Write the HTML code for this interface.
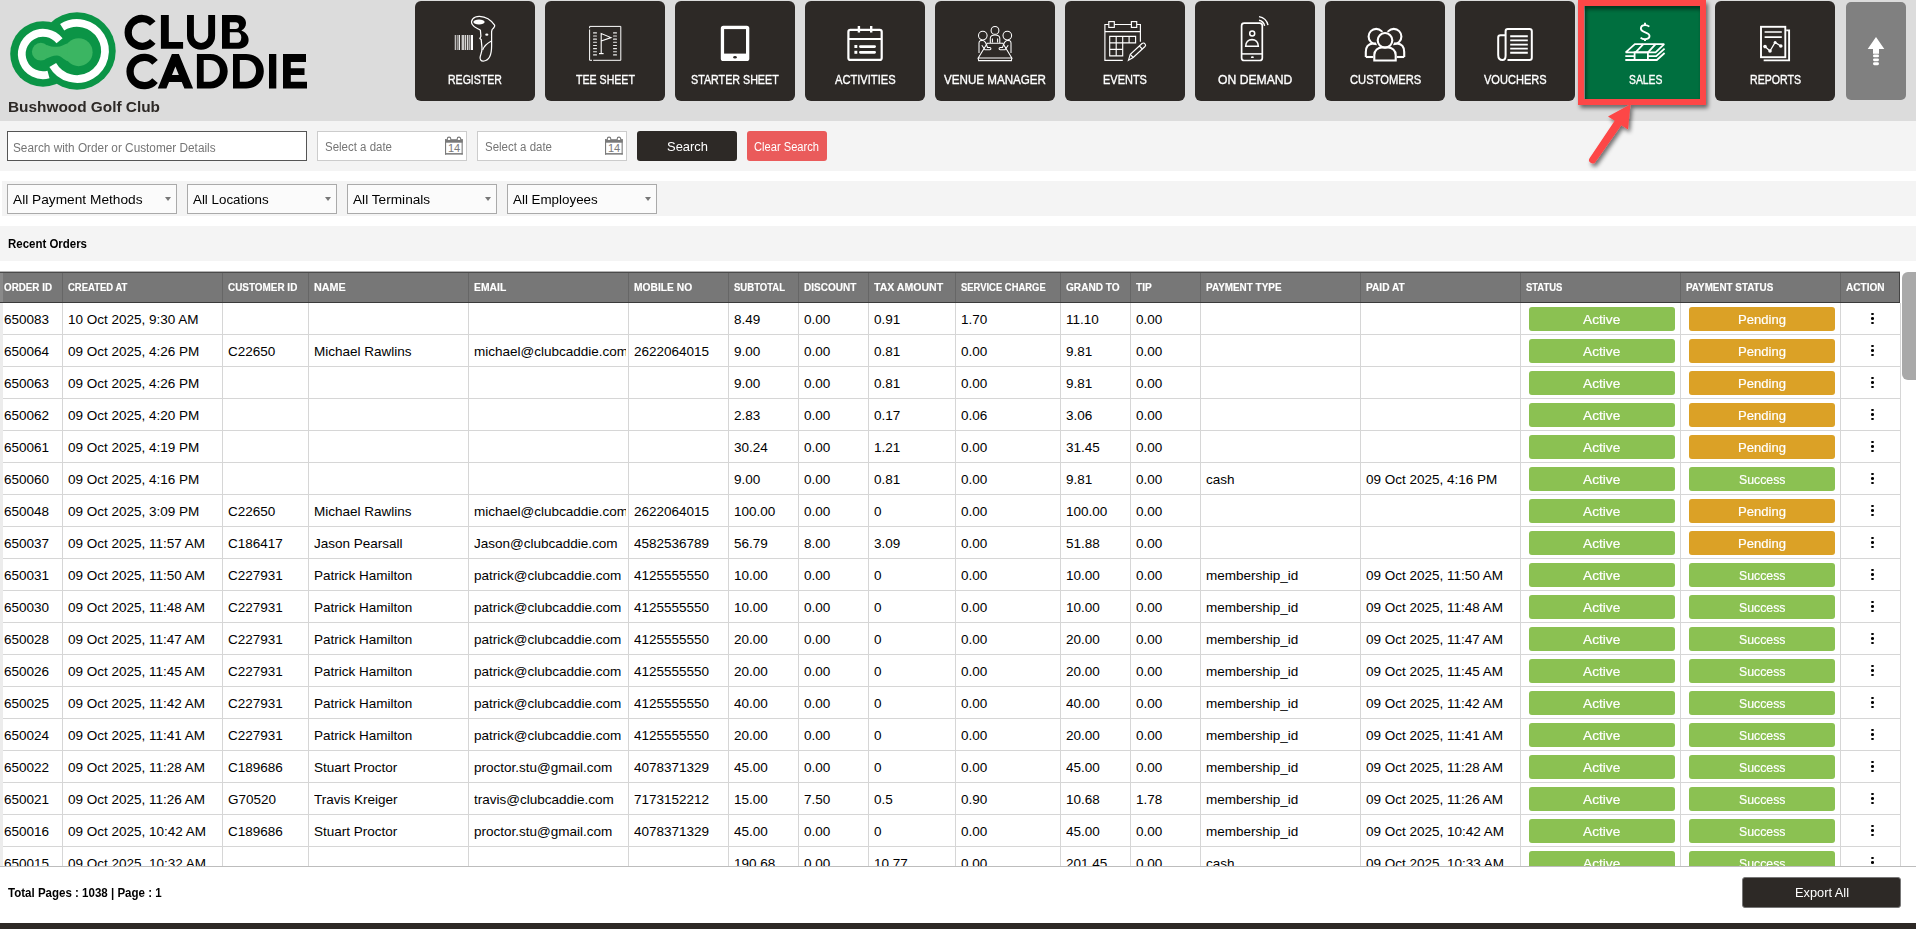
<!DOCTYPE html>
<html><head><meta charset="utf-8"><title>Club Caddie - Sales</title>
<style>
*{box-sizing:border-box}
html,body{margin:0;padding:0}
body{width:1916px;height:929px;overflow:hidden;position:relative;background:#fff;font-family:"Liberation Sans", sans-serif;color:#000}
.abs{position:absolute}
.nb{position:absolute;top:1px;width:120px;height:100px;background:#2d2926;border-radius:6px}
.nb svg{position:absolute;left:30px;top:9px;width:60px;height:60px}
.nb .lb{position:absolute;left:-40px;width:200px;top:70px;text-align:center;color:#fff;font-size:12.5px;line-height:18px;white-space:nowrap}
.nb .lb span{display:inline-block;transform:scaleX(.85)}
.sel{position:absolute;top:184px;height:30px;background:#fbfbfb;border:1px solid #aaa;font-size:13.5px;line-height:28px;padding-left:6px;white-space:nowrap}
.sel:after{content:"";position:absolute;right:5px;top:12px;border-left:3.5px solid transparent;border-right:3.5px solid transparent;border-top:4.5px solid #777}
.th{position:absolute;top:273px;height:29px;color:#fff;font-weight:bold;font-size:11.5px;line-height:29px;white-space:nowrap;overflow:hidden}
.th span{display:inline-block;transform:scaleX(.86);transform-origin:0 50%}
.td{position:absolute;height:31px;font-size:13.5px;line-height:32px;white-space:nowrap;overflow:hidden;color:#000}
.vl{position:absolute;width:1px;background:#d6d6d6}
.hl{position:absolute;height:1px;background:#d6d6d6}
.bd{position:absolute;width:146px;height:24px;border-radius:3px;color:#fff;font-size:13.5px;line-height:25px;text-align:center}
.act{background:#8bc152}
.pen{background:#dba126}
.keb{position:absolute;width:3px;height:2.2px;background:#000;border-radius:50%}
</style></head><body>

<div class="abs" style="left:0;top:0;width:1916px;height:121px;background:#dcdcdc"></div>
<svg class="abs" style="left:0;top:0" width="120" height="100" viewBox="0 0 120 100">
<g fill="#0b9446">
<circle cx="43" cy="54" r="32.8"/>
<circle cx="77" cy="51" r="38.7"/>
</g>
<g fill="none" stroke="#fff" stroke-width="7.8">
<path d="M59.55 40.74 A21.2 21.2 0 1 0 48.49 74.48"/>
<path d="M62.16 27.25 A28 28 0 1 1 52.75 65.00"/>
</g>
<g fill="#3bb562">
<circle cx="40.8" cy="51.7" r="8.9"/>
<circle cx="78.6" cy="52.2" r="14"/>
<path d="M46.5 44.9 C50 46.3 53 46.9 57 46.8 C61 46.7 64 44.5 67.9 43.2 L67.9 61.2 C64 59.8 61 55.6 57 55.4 C53 55.3 50 57 46.5 58.5 Z"/>
</g>
</svg>
<svg class="abs" style="left:0;top:0" width="400" height="100" viewBox="0 0 400 100">
<g fill="none" stroke="#000" stroke-width="7.3">
<path d="M152.75 23.47 A13.9 13.9 0 1 0 152.75 41.33"/>
<path d="M155.04 62.40 A14.15 14.15 0 1 0 155.04 80.60"/>
<path d="M190.45 14.9 V35.8 A10.6 10.6 0 0 0 211.65 35.8 V14.9" stroke-width="6.9"/>
</g>
<g fill="#000" fill-rule="evenodd">
<path d="M160.9 14.9 H168.8 V42 H183.1 V48.8 H160.9 Z"/>
<path d="M222 14.9 H236 C242 14.9 246 18.3 246 23 C246 26.5 244.3 29 241.3 30.5 C245.6 32 248.6 35.5 248.6 40 C248.6 45.5 244 48.8 237 48.8 H222 Z M229.8 22.2 H235.5 C237.8 22.2 239 23.6 239 25.6 C239 27.6 237.8 29 235.5 29 H229.8 Z M229.8 32.3 H237 C239.8 32.3 241.3 34.3 241.3 37.5 C241.3 40.8 239.8 42.8 237 42.8 H229.8 Z"/>
<path d="M157.8 88.5 L171.9 54 H178.9 L193.1 88.5 H184.4 L181.74 82 H169.06 L166.4 88.5 Z M171.96 74.9 L175.4 66.5 L178.84 74.9 Z"/>
<path d="M196.9 54 H210 C220.5 54 227.7 61.5 227.7 71.25 C227.7 81 220.5 88.5 210 88.5 H196.9 Z M203.7 59.9 H209.5 C215.8 59.9 219.9 64.5 219.9 70.8 C219.9 77.1 215.8 81.7 209.5 81.7 H203.7 Z"/>
<path transform="translate(36.1 0)" d="M196.9 54 H210 C220.5 54 227.7 61.5 227.7 71.25 C227.7 81 220.5 88.5 210 88.5 H196.9 Z M203.7 59.9 H209.5 C215.8 59.9 219.9 64.5 219.9 70.8 C219.9 77.1 215.8 81.7 209.5 81.7 H203.7 Z"/>
<path d="M269 54 H276.3 V88.5 H269 Z"/>
<path d="M283 54 H306 V61.9 H290.8 V68.2 H304.5 V74.9 H290.8 V81.7 H307 V88.5 H283 Z"/>
</g>
</svg>
<div class="abs" style="left:7.70px;top:98.58px;font-size:15.5px;line-height:15.5px;font-weight:bold;color:#2d2926;white-space:nowrap;transform:scaleX(0.9918);transform-origin:0 0;">Bushwood Golf Club</div>
<div class="nb" style="left:415px;background:#2d2926;border-radius:6px"><svg viewBox="0 0 60 60">
<g fill="#fff">
<rect x="9.8" y="25" width="0.9" height="15"/><rect x="11.8" y="25" width="0.7" height="15"/>
<rect x="13.6" y="25" width="1.3" height="15"/><rect x="16.6" y="25" width="2.4" height="15" opacity=".75"/>
<rect x="19.6" y="25" width="1.6" height="15" opacity=".8"/><rect x="22" y="25" width="1.2" height="15" opacity=".85"/>
<rect x="23.8" y="25" width="0.8" height="15"/><rect x="25.7" y="25" width="2.3" height="15"/>
</g>
<path d="M27.3 14.5 C25 10.5 28.5 6.2 34.5 6.3 C41 6.5 46.5 10.5 49.6 15.2 C50.2 16.6 48.4 18.3 47.1 19.6 L46.6 21.5 L46.6 36 C46.6 44.5 44.5 50.2 39 51 C35.8 51.4 34.4 49 35.3 46.2 C35.9 44.2 37.2 41.6 37 38 L36.2 29.5 L34.9 28.5 L35.9 26.2 L35.4 20.3 C33 18.6 29 17.6 27.3 14.5 Z" stroke="#fff" fill="none" stroke-width="1.25"/>
<path d="M46.4 31 C42.5 33 39 36.5 37.6 40" stroke="#fff" fill="none" stroke-width="1.2"/>
<ellipse cx="34" cy="12" rx="5.6" ry="2.6" fill="#fff"/>
<ellipse cx="41.8" cy="24.7" rx="1.6" ry="1.1" fill="#fff"/>
</svg></div>
<div class="abs" style="left:448.25px;top:74.32px;font-size:12.5px;line-height:12.5px;color:#fff;white-space:nowrap;transform:scaleX(0.8435);transform-origin:0 0;-webkit-text-stroke:0.35px #fff;">REGISTER</div>
<div class="nb" style="left:545px;background:#2d2926;border-radius:6px"><svg viewBox="0 0 60 60">
<path d="M14.6 19.5 V50.3 H17 M18.2 50.3 H45.8 V16.4 H14.6 V18.2" stroke="#fff" fill="none" stroke-width="1"/>
<g fill="#fff" opacity=".9"><rect x="18" y="22.30" width="4" height="1.1" rx=".5"/><rect x="38" y="22.30" width="4" height="1.1" rx=".5"/><rect x="18" y="25.45" width="4" height="1.1" rx=".5"/><rect x="38" y="25.45" width="4" height="1.1" rx=".5"/><rect x="18" y="28.60" width="4" height="1.1" rx=".5"/><rect x="38" y="28.60" width="4" height="1.1" rx=".5"/><rect x="18" y="31.75" width="4" height="1.1" rx=".5"/><rect x="38" y="31.75" width="4" height="1.1" rx=".5"/><rect x="18" y="34.90" width="4" height="1.1" rx=".5"/><rect x="38" y="34.90" width="4" height="1.1" rx=".5"/><rect x="18" y="38.05" width="4" height="1.1" rx=".5"/><rect x="38" y="38.05" width="4" height="1.1" rx=".5"/><rect x="18" y="41.20" width="4" height="1.1" rx=".5"/><rect x="38" y="41.20" width="4" height="1.1" rx=".5"/><rect x="18" y="44.35" width="4" height="1.1" rx=".5"/><rect x="38" y="44.35" width="4" height="1.1" rx=".5"/></g>
<path d="M26.2 43.5 V23.6 L36 27.6 L26.2 31" stroke="#fff" fill="none" stroke-width="1.1"/>
<path d="M24 43.6 H28.6" stroke="#fff" fill="none" stroke-width="1.2"/>
</svg></div>
<div class="abs" style="left:575.75px;top:74.32px;font-size:12.5px;line-height:12.5px;color:#fff;white-space:nowrap;transform:scaleX(0.8480);transform-origin:0 0;-webkit-text-stroke:0.35px #fff;">TEE SHEET</div>
<div class="nb" style="left:675px;background:#2d2926;border-radius:6px"><svg viewBox="0 0 60 60">
<rect x="15.8" y="15.8" width="28.5" height="35.2" rx="2.6" fill="#fff"/>
<rect x="19.1" y="19.1" width="21.9" height="24.5" fill="#2d2926"/>
<ellipse cx="30" cy="47.3" rx="1.8" ry="1.2" fill="#2d2926"/>
</svg></div>
<div class="abs" style="left:691.35px;top:74.32px;font-size:12.5px;line-height:12.5px;color:#fff;white-space:nowrap;transform:scaleX(0.8570);transform-origin:0 0;-webkit-text-stroke:0.35px #fff;">STARTER SHEET</div>
<div class="nb" style="left:805px;background:#2d2926;border-radius:6px"><svg viewBox="0 0 60 60">
<rect x="13.4" y="19.8" width="33.3" height="30.1" rx="2" stroke="#fff" fill="none" stroke-width="2.2"/>
<path d="M13.4 29 H46.7" stroke="#fff" fill="none" stroke-width="2.2"/>
<path d="M23.9 16 V22.6 M36.2 16 V22.6" stroke="#fff" fill="none" stroke-width="2.4"/>
<rect x="19.4" y="35" width="2.9" height="3" fill="#fff"/><rect x="19.4" y="40.8" width="2.9" height="3" fill="#fff"/>
<path d="M25.4 36.6 H39.6 M25.4 42.3 H39.6" stroke="#fff" fill="none" stroke-width="2.8" stroke-linecap="round"/>
</svg></div>
<div class="abs" style="left:834.90px;top:74.32px;font-size:12.5px;line-height:12.5px;color:#fff;white-space:nowrap;transform:scaleX(0.8903);transform-origin:0 0;-webkit-text-stroke:0.35px #fff;">ACTIVITIES</div>
<div class="nb" style="left:935px;background:#2d2926;border-radius:6px"><svg viewBox="0 0 60 60">
<g stroke="#fff" fill="none" stroke-width="1.05">
<circle cx="30" cy="20.4" r="3.9"/>
<circle cx="17.8" cy="25.6" r="4.3"/>
<circle cx="42.3" cy="25.6" r="4.3"/>
<path d="M25.3 33 V28.3 C25.3 26 27 25 30 25 C33 25 34.8 26 34.8 28.3 V33"/>
<path d="M27.4 32.5 V28.5 M32.6 32.5 V28.5"/>
<path d="M22.3 33.3 H37.8 L46.8 48 H13.2 Z"/>
<path d="M13.2 48 L13.6 50.6 H46.4 L46.8 48"/>
<path d="M14 43 V33 C14 31 15.5 30.3 17.5 30.4 C19.5 30.5 20.6 32 21.4 34.5 L22.5 37.5 H24.8 C26.2 37.5 26.4 39.6 24.8 39.8 H20 L16.8 35.2"/>
<path d="M46 43 V33 C46 31 44.5 30.3 42.5 30.4 C40.5 30.5 39.4 32 38.6 34.5 L37.5 37.5 H35.2 C33.8 37.5 33.6 39.6 35.2 39.8 H40 L43.2 35.2"/>
</g>
</svg></div>
<div class="abs" style="left:944.20px;top:74.32px;font-size:12.5px;line-height:12.5px;color:#fff;white-space:nowrap;transform:scaleX(0.9294);transform-origin:0 0;-webkit-text-stroke:0.35px #fff;">VENUE MANAGER</div>
<div class="nb" style="left:1065px;background:#2d2926;border-radius:6px"><svg viewBox="0 0 60 60">
<g stroke="#fff" fill="none" stroke-width="1.15">
<path d="M27.8 50.3 H9.9 V14.5 H45.4 V31.7"/>
<path d="M9.9 21.6 H45.4"/>
<rect x="13.8" y="11.6" width="5.5" height="5.8" fill="#2d2926"/>
<rect x="36.4" y="11.6" width="5.3" height="5.8" fill="#2d2926"/>
<path d="M14.7 26.3 H40.6 V32.9 H27.7 V45.8 H14.7 Z"/>
<path d="M21.2 26.3 V45.8 M27.7 26.3 V32.9 M34.1 26.3 V32.9 M14.7 32.9 H27.7 M14.7 39.3 H27.7"/>
<path d="M33.4 50.3 L35.3 44.3 L47 33.5 C48 32.7 49.2 32.8 50 33.8 C50.8 34.7 50.7 35.8 50 36.5 L38.2 47.5 Z"/>
<path d="M35.3 44.3 L38.2 47.5 M44.3 36 L47.5 39.2"/>
</g>
</svg></div>
<div class="abs" style="left:1103.25px;top:74.32px;font-size:12.5px;line-height:12.5px;color:#fff;white-space:nowrap;transform:scaleX(0.8777);transform-origin:0 0;-webkit-text-stroke:0.35px #fff;">EVENTS</div>
<div class="nb" style="left:1195px;background:#2d2926;border-radius:6px"><svg viewBox="0 0 60 60">
<g stroke="#fff" fill="none">
<rect x="16.6" y="13.1" width="20.7" height="37.4" rx="2.6" stroke-width="1.7"/>
<path d="M16.6 43.9 H37.3" stroke-width="1.5"/>
<circle cx="27.2" cy="23.6" r="2.5" stroke-width="1.5"/>
<path d="M20.7 36.3 C20.7 32 23.5 29.6 27 29.6 C30.5 29.6 33.3 32 33.3 36.3 Z" stroke-width="1.6"/>
<path d="M34 6.6 C38.5 7.3 42 10.8 43 15.2" stroke-width="1.4"/>
<path d="M34 10.3 C36.8 10.8 39 13 39.6 15.9" stroke-width="1.4"/>
</g>
<ellipse cx="27.4" cy="47.2" rx="1.5" ry="0.9" fill="#fff"/>
</svg></div>
<div class="abs" style="left:1218.00px;top:74.32px;font-size:12.5px;line-height:12.5px;color:#fff;white-space:nowrap;transform:scaleX(0.9739);transform-origin:0 0;-webkit-text-stroke:0.35px #fff;">ON DEMAND</div>
<div class="nb" style="left:1325px;background:#2d2926;border-radius:6px"><svg viewBox="0 0 60 60">
<g stroke="#fff" fill="none" stroke-width="2.1">
<path d="M10.8 47 V42 C10.8 36.5 14 33.8 18 33.5 L22 33.5"/>
<path d="M10.8 47 H18.6"/>
<circle cx="21.2" cy="26.5" r="7.6"/>
<path d="M49.2 47 V42 C49.2 36.5 46 33.8 42 33.5 L38 33.5"/>
<path d="M49.2 47 H41.4"/>
<circle cx="38.8" cy="26.5" r="7.6"/>
</g>
<circle cx="30" cy="30.5" r="9.3" fill="#2d2926"/>
<path d="M18.3 51.5 V44 C18.3 39.5 22 36.2 26.5 36.2 H33.5 C38 36.2 41.7 39.5 41.7 44 V51.5 Z" fill="#2d2926"/>
<g stroke="#fff" fill="none" stroke-width="2.1">
<circle cx="30" cy="30.3" r="7.3"/>
<path d="M19.3 50.5 V45 C19.3 40.5 23 37.5 27 37.5 H33 C37 37.5 40.7 40.5 40.7 45 V50.5 Z"/>
</g>
</svg></div>
<div class="abs" style="left:1349.60px;top:74.32px;font-size:12.5px;line-height:12.5px;color:#fff;white-space:nowrap;transform:scaleX(0.8940);transform-origin:0 0;-webkit-text-stroke:0.35px #fff;">CUSTOMERS</div>
<div class="nb" style="left:1455px;background:#2d2926;border-radius:6px"><svg viewBox="0 0 60 60">
<g stroke="#fff" fill="none" stroke-width="2">
<path d="M22.5 50 H44.5 C46 50 46.8 49.2 46.8 47.7 V21.3 C46.8 19.8 46 19 44.5 19 H22.8 C21.3 19 20.6 19.8 20.6 21.3 V45.5 C20.6 48.5 19.8 50 17.5 50 C14.7 50 13.2 48 13.2 45 V27.5 C13.2 26 14 25.3 15.5 25.3 H20.6"/>
<path d="M25.2 26.3 H42.8 M25.2 30.4 H42.8 M25.2 34.6 H42.8 M25.2 38.6 H42.8 M25.2 42.7 H42.8" stroke-width="1.9"/>
</g>
</svg></div>
<div class="abs" style="left:1483.90px;top:74.32px;font-size:12.5px;line-height:12.5px;color:#fff;white-space:nowrap;transform:scaleX(0.8836);transform-origin:0 0;-webkit-text-stroke:0.35px #fff;">VOUCHERS</div>
<div class="nb" style="left:1585px;background:#006f3f;border-radius:0"><svg viewBox="0 0 60 60">
<g stroke="#fff" fill="none" stroke-width="1.9">
<path d="M34.3 16.6 C33.2 15.6 32 15.1 30 15.1 C27.6 15.1 25.9 16.4 25.9 18.6 C25.9 23.2 34.5 21.6 34.5 26.1 C34.5 28.3 32.7 29.2 30 29.2 C28.2 29.2 26.6 28.6 25.6 27.6"/>
<path d="M30 12.8 V15.1 M30 29.2 V31"/>
</g>
<g stroke="#fff" fill="none" stroke-width="1.8" stroke-miterlimit="2">
<path d="M10.7 42.3 L19.9 34.1 H49.2 L40.6 42.3 Z"/>
<path d="M20.6 42.3 L28.3 34.1 M33 42.3 L40.6 34.1"/>
<rect x="19.6" y="42.3" width="13.3" height="7.7"/>
<path d="M10.3 46.2 H19.6 M32.9 46.2 H41.2 L49.6 38.6"/>
<path d="M10.3 50 H41.8 L49.6 43"/>
</g>
</svg></div>
<div class="abs" style="left:1628.50px;top:74.32px;font-size:12.5px;line-height:12.5px;color:#fff;white-space:nowrap;transform:scaleX(0.8287);transform-origin:0 0;-webkit-text-stroke:0.35px #fff;">SALES</div>
<div class="nb" style="left:1715px;background:#2d2926;border-radius:6px"><svg viewBox="0 0 60 60">
<g stroke="#fff" fill="none" stroke-width="1.9">
<rect x="16" y="16.8" width="24.3" height="30.4"/>
<path d="M19.6 49.6 V50.4 H44.1 V20.4 H41.2"/>
<path d="M19.6 22 H36.8 M19.6 27.1 H36.8" stroke-width="1.7"/>
<path d="M20 36.6 L25 41 L30.1 32.5 L35.8 36" stroke-width="1.3"/>
</g>
<g fill="#fff"><circle cx="20" cy="36.6" r="1.8"/><circle cx="25" cy="41" r="1.8"/><circle cx="30.1" cy="32.5" r="1.5"/><circle cx="35.8" cy="36" r="1.8"/></g>
</svg></div>
<div class="abs" style="left:1749.65px;top:74.32px;font-size:12.5px;line-height:12.5px;color:#fff;white-space:nowrap;transform:scaleX(0.8488);transform-origin:0 0;-webkit-text-stroke:0.35px #fff;">REPORTS</div>
<div class="abs" style="left:1846px;top:2px;width:60px;height:98px;background:#808080;border-radius:5px"></div>
<svg class="abs" style="left:1846px;top:2px" width="60" height="98" viewBox="0 0 60 98">
<path d="M30 35 L38.3 47 H33 V51.8 H27 V47 H21.7 Z" fill="#fff"/>
<rect x="27" y="52.6" width="6" height="2.7" rx="1.35" fill="#fff"/>
<rect x="27" y="56.5" width="6" height="2.7" rx="1.35" fill="#fff"/>
<rect x="27" y="60.3" width="6" height="2.9" rx="1.45" fill="#fff"/>
</svg>
<div class="abs" style="left:0;top:121px;width:1916px;height:50px;background:#f4f4f4"></div>
<div class="abs" style="left:7px;top:131px;width:300px;height:30px;background:#fff;border:1px solid #555"></div>
<div class="abs" style="left:13.40px;top:141.74px;font-size:12px;line-height:12px;color:#757575;white-space:nowrap;transform:scaleX(0.9831);transform-origin:0 0;">Search with Order or Customer Details</div>
<div class="abs" style="left:317px;top:131px;width:150px;height:30px;background:#fff;border:1px solid #ccc"><svg class="abs" style="left:126px;top:4px" width="20" height="20" viewBox="-1 -1 20 20"><g fill="#7a7a7a"><rect x="0" y="2.2" width="17.7" height="3.5"/><rect x="0" y="2.2" width="1.1" height="15.4"/><rect x="16.6" y="2.2" width="1.1" height="15.4"/><rect x="0" y="16.1" width="17.7" height="1.5"/></g><path d="M2.3 3 V1.9 A1.75 1.75 0 0 1 5.8 1.9 V3 M12.2 3 V1.9 A1.75 1.75 0 0 1 15.7 1.9 V3" fill="#fff" stroke="#7a7a7a" stroke-width="1.1"/><text x="9.1" y="14.9" font-family="Liberation Sans" font-size="11" fill="#7a7a7a" text-anchor="middle">14</text></svg></div>
<div class="abs" style="left:325.00px;top:141.32px;font-size:12.5px;line-height:12.5px;color:#757575;white-space:nowrap;transform:scaleX(0.9182);transform-origin:0 0;">Select a date</div>
<div class="abs" style="left:477px;top:131px;width:150px;height:30px;background:#fff;border:1px solid #ccc"><svg class="abs" style="left:126px;top:4px" width="20" height="20" viewBox="-1 -1 20 20"><g fill="#7a7a7a"><rect x="0" y="2.2" width="17.7" height="3.5"/><rect x="0" y="2.2" width="1.1" height="15.4"/><rect x="16.6" y="2.2" width="1.1" height="15.4"/><rect x="0" y="16.1" width="17.7" height="1.5"/></g><path d="M2.3 3 V1.9 A1.75 1.75 0 0 1 5.8 1.9 V3 M12.2 3 V1.9 A1.75 1.75 0 0 1 15.7 1.9 V3" fill="#fff" stroke="#7a7a7a" stroke-width="1.1"/><text x="9.1" y="14.9" font-family="Liberation Sans" font-size="11" fill="#7a7a7a" text-anchor="middle">14</text></svg></div>
<div class="abs" style="left:485.00px;top:141.32px;font-size:12.5px;line-height:12.5px;color:#757575;white-space:nowrap;transform:scaleX(0.9182);transform-origin:0 0;">Select a date</div>
<div class="abs" style="left:637px;top:131px;width:100px;height:30px;background:#2d2926;border-radius:3px"></div>
<div class="abs" style="left:666.50px;top:140.37px;font-size:13.5px;line-height:13.5px;color:#fff;white-space:nowrap;transform:scaleX(0.9585);transform-origin:0 0;">Search</div>
<div class="abs" style="left:747px;top:131px;width:80px;height:30px;background:#ea5b5b;border-radius:3px"></div>
<div class="abs" style="left:754.00px;top:141.32px;font-size:12.5px;line-height:12.5px;color:#fff;white-space:nowrap;transform:scaleX(0.8910);transform-origin:0 0;">Clear Search</div>
<div class="abs" style="left:2px;top:181px;width:1914px;height:35px;background:#f4f4f4"></div>
<div class="sel" style="left:7px;width:170px"></div>
<div class="abs" style="left:13.20px;top:192.80px;font-size:13px;line-height:13px;color:#000;white-space:nowrap;transform:scaleX(1.0551);transform-origin:0 0;">All Payment Methods</div>
<div class="sel" style="left:187px;width:150px"></div>
<div class="abs" style="left:193.20px;top:192.80px;font-size:13px;line-height:13px;color:#000;white-space:nowrap;transform:scaleX(1.0270);transform-origin:0 0;">All Locations</div>
<div class="sel" style="left:347px;width:150px"></div>
<div class="abs" style="left:353.20px;top:192.80px;font-size:13px;line-height:13px;color:#000;white-space:nowrap;transform:scaleX(1.0510);transform-origin:0 0;">All Terminals</div>
<div class="sel" style="left:507px;width:150px"></div>
<div class="abs" style="left:513.20px;top:192.80px;font-size:13px;line-height:13px;color:#000;white-space:nowrap;transform:scaleX(1.0283);transform-origin:0 0;">All Employees</div>
<div class="abs" style="left:0;top:226px;width:1916px;height:35px;background:#f4f4f4"></div>
<div class="abs" style="left:7.50px;top:238.32px;font-size:12.5px;line-height:12.5px;font-weight:bold;color:#000;white-space:nowrap;transform:scaleX(0.9170);transform-origin:0 0;">Recent Orders</div>
<div class="abs" style="left:0;top:271px;width:1900px;height:1px;background:#b4b4b4"></div>
<div class="abs" style="left:0;top:272px;width:1900px;height:1px;background:#4a4a4a"></div>
<div class="abs" style="left:0;top:273px;width:1900px;height:29px;background:#777"></div>
<div class="abs" style="left:0;top:302px;width:1900px;height:1px;background:#3a3a3a"></div>
<div class="abs" style="left:0;top:273px;width:3px;height:29px;background:#8a8a8a"></div>
<div class="abs" style="left:62px;top:273px;width:1px;height:29px;background:#666"></div>
<div class="abs" style="left:222px;top:273px;width:1px;height:29px;background:#666"></div>
<div class="abs" style="left:308px;top:273px;width:1px;height:29px;background:#666"></div>
<div class="abs" style="left:468px;top:273px;width:1px;height:29px;background:#666"></div>
<div class="abs" style="left:628px;top:273px;width:1px;height:29px;background:#666"></div>
<div class="abs" style="left:728px;top:273px;width:1px;height:29px;background:#666"></div>
<div class="abs" style="left:798px;top:273px;width:1px;height:29px;background:#666"></div>
<div class="abs" style="left:868px;top:273px;width:1px;height:29px;background:#666"></div>
<div class="abs" style="left:955px;top:273px;width:1px;height:29px;background:#666"></div>
<div class="abs" style="left:1060px;top:273px;width:1px;height:29px;background:#666"></div>
<div class="abs" style="left:1130px;top:273px;width:1px;height:29px;background:#666"></div>
<div class="abs" style="left:1200px;top:273px;width:1px;height:29px;background:#666"></div>
<div class="abs" style="left:1360px;top:273px;width:1px;height:29px;background:#666"></div>
<div class="abs" style="left:1520px;top:273px;width:1px;height:29px;background:#666"></div>
<div class="abs" style="left:1680px;top:273px;width:1px;height:29px;background:#666"></div>
<div class="abs" style="left:1840px;top:273px;width:1px;height:29px;background:#666"></div>
<div class="abs" style="left:1899px;top:273px;width:1px;height:29px;background:#444"></div>
<div class="abs" style="left:4.00px;top:282.17px;font-size:11.5px;line-height:11.5px;font-weight:bold;color:#fff;white-space:nowrap;transform:scaleX(0.8537);transform-origin:0 0;-webkit-text-stroke:0.15px #fff;">ORDER ID</div>
<div class="abs" style="left:68.30px;top:282.17px;font-size:11.5px;line-height:11.5px;font-weight:bold;color:#fff;white-space:nowrap;transform:scaleX(0.8252);transform-origin:0 0;-webkit-text-stroke:0.15px #fff;">CREATED AT</div>
<div class="abs" style="left:228.30px;top:282.17px;font-size:11.5px;line-height:11.5px;font-weight:bold;color:#fff;white-space:nowrap;transform:scaleX(0.8631);transform-origin:0 0;-webkit-text-stroke:0.15px #fff;">CUSTOMER ID</div>
<div class="abs" style="left:314.30px;top:282.17px;font-size:11.5px;line-height:11.5px;font-weight:bold;color:#fff;white-space:nowrap;transform:scaleX(0.9362);transform-origin:0 0;-webkit-text-stroke:0.15px #fff;">NAME</div>
<div class="abs" style="left:474.30px;top:282.17px;font-size:11.5px;line-height:11.5px;font-weight:bold;color:#fff;white-space:nowrap;transform:scaleX(0.9001);transform-origin:0 0;-webkit-text-stroke:0.15px #fff;">EMAIL</div>
<div class="abs" style="left:634.30px;top:282.17px;font-size:11.5px;line-height:11.5px;font-weight:bold;color:#fff;white-space:nowrap;transform:scaleX(0.8916);transform-origin:0 0;-webkit-text-stroke:0.15px #fff;">MOBILE NO</div>
<div class="abs" style="left:734.30px;top:282.17px;font-size:11.5px;line-height:11.5px;font-weight:bold;color:#fff;white-space:nowrap;transform:scaleX(0.8303);transform-origin:0 0;-webkit-text-stroke:0.15px #fff;">SUBTOTAL</div>
<div class="abs" style="left:804.30px;top:282.17px;font-size:11.5px;line-height:11.5px;font-weight:bold;color:#fff;white-space:nowrap;transform:scaleX(0.8709);transform-origin:0 0;-webkit-text-stroke:0.15px #fff;">DISCOUNT</div>
<div class="abs" style="left:874.30px;top:282.17px;font-size:11.5px;line-height:11.5px;font-weight:bold;color:#fff;white-space:nowrap;transform:scaleX(0.9167);transform-origin:0 0;-webkit-text-stroke:0.15px #fff;">TAX AMOUNT</div>
<div class="abs" style="left:961.30px;top:282.17px;font-size:11.5px;line-height:11.5px;font-weight:bold;color:#fff;white-space:nowrap;transform:scaleX(0.8198);transform-origin:0 0;-webkit-text-stroke:0.15px #fff;">SERVICE CHARGE</div>
<div class="abs" style="left:1066.30px;top:282.17px;font-size:11.5px;line-height:11.5px;font-weight:bold;color:#fff;white-space:nowrap;transform:scaleX(0.8769);transform-origin:0 0;-webkit-text-stroke:0.15px #fff;">GRAND TO</div>
<div class="abs" style="left:1136.30px;top:282.17px;font-size:11.5px;line-height:11.5px;font-weight:bold;color:#fff;white-space:nowrap;transform:scaleX(0.8776);transform-origin:0 0;-webkit-text-stroke:0.15px #fff;">TIP</div>
<div class="abs" style="left:1206.30px;top:282.17px;font-size:11.5px;line-height:11.5px;font-weight:bold;color:#fff;white-space:nowrap;transform:scaleX(0.8624);transform-origin:0 0;-webkit-text-stroke:0.15px #fff;">PAYMENT TYPE</div>
<div class="abs" style="left:1366.30px;top:282.17px;font-size:11.5px;line-height:11.5px;font-weight:bold;color:#fff;white-space:nowrap;transform:scaleX(0.8822);transform-origin:0 0;-webkit-text-stroke:0.15px #fff;">PAID AT</div>
<div class="abs" style="left:1526.30px;top:282.17px;font-size:11.5px;line-height:11.5px;font-weight:bold;color:#fff;white-space:nowrap;transform:scaleX(0.8218);transform-origin:0 0;-webkit-text-stroke:0.15px #fff;">STATUS</div>
<div class="abs" style="left:1686.30px;top:282.17px;font-size:11.5px;line-height:11.5px;font-weight:bold;color:#fff;white-space:nowrap;transform:scaleX(0.8575);transform-origin:0 0;-webkit-text-stroke:0.15px #fff;">PAYMENT STATUS</div>
<div class="abs" style="left:1846.30px;top:282.17px;font-size:11.5px;line-height:11.5px;font-weight:bold;color:#fff;white-space:nowrap;transform:scaleX(0.8757);transform-origin:0 0;-webkit-text-stroke:0.15px #fff;">ACTION</div>
<div class="abs" style="left:0;top:303px;width:1916px;height:563px;overflow:hidden">
<div class="abs" style="left:0;top:0;width:3px;height:563px;background:#ececec"></div>
<div class="vl" style="left:62px;top:0;height:563px"></div>
<div class="vl" style="left:222px;top:0;height:563px"></div>
<div class="vl" style="left:308px;top:0;height:563px"></div>
<div class="vl" style="left:468px;top:0;height:563px"></div>
<div class="vl" style="left:628px;top:0;height:563px"></div>
<div class="vl" style="left:728px;top:0;height:563px"></div>
<div class="vl" style="left:798px;top:0;height:563px"></div>
<div class="vl" style="left:868px;top:0;height:563px"></div>
<div class="vl" style="left:955px;top:0;height:563px"></div>
<div class="vl" style="left:1060px;top:0;height:563px"></div>
<div class="vl" style="left:1130px;top:0;height:563px"></div>
<div class="vl" style="left:1200px;top:0;height:563px"></div>
<div class="vl" style="left:1360px;top:0;height:563px"></div>
<div class="vl" style="left:1520px;top:0;height:563px"></div>
<div class="vl" style="left:1680px;top:0;height:563px"></div>
<div class="vl" style="left:1840px;top:0;height:563px"></div>
<div class="vl" style="left:1900px;top:0;height:563px"></div>
<div class="hl" style="left:3px;top:31px;width:1897px"></div>
<div class="td" style="left:4px;top:1px;width:56px">650083</div>
<div class="td" style="left:68px;top:1px;width:152px">10 Oct 2025, 9:30 AM</div>
<div class="td" style="left:734px;top:1px;width:62px">8.49</div>
<div class="td" style="left:804px;top:1px;width:62px">0.00</div>
<div class="td" style="left:874px;top:1px;width:79px">0.91</div>
<div class="td" style="left:961px;top:1px;width:97px">1.70</div>
<div class="td" style="left:1066px;top:1px;width:62px">11.10</div>
<div class="td" style="left:1136px;top:1px;width:62px">0.00</div>
<div class="bd act" style="left:1529px;top:4px"></div>
<div class="abs" style="left:1583.35px;top:10.27px;font-size:13.5px;line-height:13.5px;color:#fff;white-space:nowrap;transform:scaleX(1.0146);transform-origin:0 0;-webkit-text-stroke:0.2px #fff;">Active</div>
<div class="bd pen" style="left:1689px;top:4px"></div>
<div class="abs" style="left:1738.00px;top:10.27px;font-size:13.5px;line-height:13.5px;color:#fff;white-space:nowrap;transform:scaleX(0.9688);transform-origin:0 0;-webkit-text-stroke:0.2px #fff;">Pending</div>
<div class="keb" style="left:1870.8px;top:9.70px"></div>
<div class="keb" style="left:1870.8px;top:14.45px"></div>
<div class="keb" style="left:1870.8px;top:19.20px"></div>
<div class="hl" style="left:3px;top:63px;width:1897px"></div>
<div class="td" style="left:4px;top:33px;width:56px">650064</div>
<div class="td" style="left:68px;top:33px;width:152px">09 Oct 2025, 4:26 PM</div>
<div class="td" style="left:228px;top:33px;width:78px">C22650</div>
<div class="td" style="left:314px;top:33px;width:152px">Michael Rawlins</div>
<div class="td" style="left:474px;top:33px;width:152px">michael@clubcaddie.com</div>
<div class="td" style="left:634px;top:33px;width:92px">2622064015</div>
<div class="td" style="left:734px;top:33px;width:62px">9.00</div>
<div class="td" style="left:804px;top:33px;width:62px">0.00</div>
<div class="td" style="left:874px;top:33px;width:79px">0.81</div>
<div class="td" style="left:961px;top:33px;width:97px">0.00</div>
<div class="td" style="left:1066px;top:33px;width:62px">9.81</div>
<div class="td" style="left:1136px;top:33px;width:62px">0.00</div>
<div class="bd act" style="left:1529px;top:36px"></div>
<div class="abs" style="left:1583.35px;top:42.27px;font-size:13.5px;line-height:13.5px;color:#fff;white-space:nowrap;transform:scaleX(1.0146);transform-origin:0 0;-webkit-text-stroke:0.2px #fff;">Active</div>
<div class="bd pen" style="left:1689px;top:36px"></div>
<div class="abs" style="left:1738.00px;top:42.27px;font-size:13.5px;line-height:13.5px;color:#fff;white-space:nowrap;transform:scaleX(0.9688);transform-origin:0 0;-webkit-text-stroke:0.2px #fff;">Pending</div>
<div class="keb" style="left:1870.8px;top:41.70px"></div>
<div class="keb" style="left:1870.8px;top:46.45px"></div>
<div class="keb" style="left:1870.8px;top:51.20px"></div>
<div class="hl" style="left:3px;top:95px;width:1897px"></div>
<div class="td" style="left:4px;top:65px;width:56px">650063</div>
<div class="td" style="left:68px;top:65px;width:152px">09 Oct 2025, 4:26 PM</div>
<div class="td" style="left:734px;top:65px;width:62px">9.00</div>
<div class="td" style="left:804px;top:65px;width:62px">0.00</div>
<div class="td" style="left:874px;top:65px;width:79px">0.81</div>
<div class="td" style="left:961px;top:65px;width:97px">0.00</div>
<div class="td" style="left:1066px;top:65px;width:62px">9.81</div>
<div class="td" style="left:1136px;top:65px;width:62px">0.00</div>
<div class="bd act" style="left:1529px;top:68px"></div>
<div class="abs" style="left:1583.35px;top:74.27px;font-size:13.5px;line-height:13.5px;color:#fff;white-space:nowrap;transform:scaleX(1.0146);transform-origin:0 0;-webkit-text-stroke:0.2px #fff;">Active</div>
<div class="bd pen" style="left:1689px;top:68px"></div>
<div class="abs" style="left:1738.00px;top:74.27px;font-size:13.5px;line-height:13.5px;color:#fff;white-space:nowrap;transform:scaleX(0.9688);transform-origin:0 0;-webkit-text-stroke:0.2px #fff;">Pending</div>
<div class="keb" style="left:1870.8px;top:73.70px"></div>
<div class="keb" style="left:1870.8px;top:78.45px"></div>
<div class="keb" style="left:1870.8px;top:83.20px"></div>
<div class="hl" style="left:3px;top:127px;width:1897px"></div>
<div class="td" style="left:4px;top:97px;width:56px">650062</div>
<div class="td" style="left:68px;top:97px;width:152px">09 Oct 2025, 4:20 PM</div>
<div class="td" style="left:734px;top:97px;width:62px">2.83</div>
<div class="td" style="left:804px;top:97px;width:62px">0.00</div>
<div class="td" style="left:874px;top:97px;width:79px">0.17</div>
<div class="td" style="left:961px;top:97px;width:97px">0.06</div>
<div class="td" style="left:1066px;top:97px;width:62px">3.06</div>
<div class="td" style="left:1136px;top:97px;width:62px">0.00</div>
<div class="bd act" style="left:1529px;top:100px"></div>
<div class="abs" style="left:1583.35px;top:106.27px;font-size:13.5px;line-height:13.5px;color:#fff;white-space:nowrap;transform:scaleX(1.0146);transform-origin:0 0;-webkit-text-stroke:0.2px #fff;">Active</div>
<div class="bd pen" style="left:1689px;top:100px"></div>
<div class="abs" style="left:1738.00px;top:106.27px;font-size:13.5px;line-height:13.5px;color:#fff;white-space:nowrap;transform:scaleX(0.9688);transform-origin:0 0;-webkit-text-stroke:0.2px #fff;">Pending</div>
<div class="keb" style="left:1870.8px;top:105.70px"></div>
<div class="keb" style="left:1870.8px;top:110.45px"></div>
<div class="keb" style="left:1870.8px;top:115.20px"></div>
<div class="hl" style="left:3px;top:159px;width:1897px"></div>
<div class="td" style="left:4px;top:129px;width:56px">650061</div>
<div class="td" style="left:68px;top:129px;width:152px">09 Oct 2025, 4:19 PM</div>
<div class="td" style="left:734px;top:129px;width:62px">30.24</div>
<div class="td" style="left:804px;top:129px;width:62px">0.00</div>
<div class="td" style="left:874px;top:129px;width:79px">1.21</div>
<div class="td" style="left:961px;top:129px;width:97px">0.00</div>
<div class="td" style="left:1066px;top:129px;width:62px">31.45</div>
<div class="td" style="left:1136px;top:129px;width:62px">0.00</div>
<div class="bd act" style="left:1529px;top:132px"></div>
<div class="abs" style="left:1583.35px;top:138.27px;font-size:13.5px;line-height:13.5px;color:#fff;white-space:nowrap;transform:scaleX(1.0146);transform-origin:0 0;-webkit-text-stroke:0.2px #fff;">Active</div>
<div class="bd pen" style="left:1689px;top:132px"></div>
<div class="abs" style="left:1738.00px;top:138.27px;font-size:13.5px;line-height:13.5px;color:#fff;white-space:nowrap;transform:scaleX(0.9688);transform-origin:0 0;-webkit-text-stroke:0.2px #fff;">Pending</div>
<div class="keb" style="left:1870.8px;top:137.70px"></div>
<div class="keb" style="left:1870.8px;top:142.45px"></div>
<div class="keb" style="left:1870.8px;top:147.20px"></div>
<div class="hl" style="left:3px;top:191px;width:1897px"></div>
<div class="td" style="left:4px;top:161px;width:56px">650060</div>
<div class="td" style="left:68px;top:161px;width:152px">09 Oct 2025, 4:16 PM</div>
<div class="td" style="left:734px;top:161px;width:62px">9.00</div>
<div class="td" style="left:804px;top:161px;width:62px">0.00</div>
<div class="td" style="left:874px;top:161px;width:79px">0.81</div>
<div class="td" style="left:961px;top:161px;width:97px">0.00</div>
<div class="td" style="left:1066px;top:161px;width:62px">9.81</div>
<div class="td" style="left:1136px;top:161px;width:62px">0.00</div>
<div class="td" style="left:1206px;top:161px;width:152px">cash</div>
<div class="td" style="left:1366px;top:161px;width:152px">09 Oct 2025, 4:16 PM</div>
<div class="bd act" style="left:1529px;top:164px"></div>
<div class="abs" style="left:1583.35px;top:170.27px;font-size:13.5px;line-height:13.5px;color:#fff;white-space:nowrap;transform:scaleX(1.0146);transform-origin:0 0;-webkit-text-stroke:0.2px #fff;">Active</div>
<div class="bd act" style="left:1689px;top:164px"></div>
<div class="abs" style="left:1738.75px;top:170.27px;font-size:13.5px;line-height:13.5px;color:#fff;white-space:nowrap;transform:scaleX(0.9114);transform-origin:0 0;-webkit-text-stroke:0.2px #fff;">Success</div>
<div class="keb" style="left:1870.8px;top:169.70px"></div>
<div class="keb" style="left:1870.8px;top:174.45px"></div>
<div class="keb" style="left:1870.8px;top:179.20px"></div>
<div class="hl" style="left:3px;top:223px;width:1897px"></div>
<div class="td" style="left:4px;top:193px;width:56px">650048</div>
<div class="td" style="left:68px;top:193px;width:152px">09 Oct 2025, 3:09 PM</div>
<div class="td" style="left:228px;top:193px;width:78px">C22650</div>
<div class="td" style="left:314px;top:193px;width:152px">Michael Rawlins</div>
<div class="td" style="left:474px;top:193px;width:152px">michael@clubcaddie.com</div>
<div class="td" style="left:634px;top:193px;width:92px">2622064015</div>
<div class="td" style="left:734px;top:193px;width:62px">100.00</div>
<div class="td" style="left:804px;top:193px;width:62px">0.00</div>
<div class="td" style="left:874px;top:193px;width:79px">0</div>
<div class="td" style="left:961px;top:193px;width:97px">0.00</div>
<div class="td" style="left:1066px;top:193px;width:62px">100.00</div>
<div class="td" style="left:1136px;top:193px;width:62px">0.00</div>
<div class="bd act" style="left:1529px;top:196px"></div>
<div class="abs" style="left:1583.35px;top:202.27px;font-size:13.5px;line-height:13.5px;color:#fff;white-space:nowrap;transform:scaleX(1.0146);transform-origin:0 0;-webkit-text-stroke:0.2px #fff;">Active</div>
<div class="bd pen" style="left:1689px;top:196px"></div>
<div class="abs" style="left:1738.00px;top:202.27px;font-size:13.5px;line-height:13.5px;color:#fff;white-space:nowrap;transform:scaleX(0.9688);transform-origin:0 0;-webkit-text-stroke:0.2px #fff;">Pending</div>
<div class="keb" style="left:1870.8px;top:201.70px"></div>
<div class="keb" style="left:1870.8px;top:206.45px"></div>
<div class="keb" style="left:1870.8px;top:211.20px"></div>
<div class="hl" style="left:3px;top:255px;width:1897px"></div>
<div class="td" style="left:4px;top:225px;width:56px">650037</div>
<div class="td" style="left:68px;top:225px;width:152px">09 Oct 2025, 11:57 AM</div>
<div class="td" style="left:228px;top:225px;width:78px">C186417</div>
<div class="td" style="left:314px;top:225px;width:152px">Jason Pearsall</div>
<div class="td" style="left:474px;top:225px;width:152px">Jason@clubcaddie.com</div>
<div class="td" style="left:634px;top:225px;width:92px">4582536789</div>
<div class="td" style="left:734px;top:225px;width:62px">56.79</div>
<div class="td" style="left:804px;top:225px;width:62px">8.00</div>
<div class="td" style="left:874px;top:225px;width:79px">3.09</div>
<div class="td" style="left:961px;top:225px;width:97px">0.00</div>
<div class="td" style="left:1066px;top:225px;width:62px">51.88</div>
<div class="td" style="left:1136px;top:225px;width:62px">0.00</div>
<div class="bd act" style="left:1529px;top:228px"></div>
<div class="abs" style="left:1583.35px;top:234.27px;font-size:13.5px;line-height:13.5px;color:#fff;white-space:nowrap;transform:scaleX(1.0146);transform-origin:0 0;-webkit-text-stroke:0.2px #fff;">Active</div>
<div class="bd pen" style="left:1689px;top:228px"></div>
<div class="abs" style="left:1738.00px;top:234.27px;font-size:13.5px;line-height:13.5px;color:#fff;white-space:nowrap;transform:scaleX(0.9688);transform-origin:0 0;-webkit-text-stroke:0.2px #fff;">Pending</div>
<div class="keb" style="left:1870.8px;top:233.70px"></div>
<div class="keb" style="left:1870.8px;top:238.45px"></div>
<div class="keb" style="left:1870.8px;top:243.20px"></div>
<div class="hl" style="left:3px;top:287px;width:1897px"></div>
<div class="td" style="left:4px;top:257px;width:56px">650031</div>
<div class="td" style="left:68px;top:257px;width:152px">09 Oct 2025, 11:50 AM</div>
<div class="td" style="left:228px;top:257px;width:78px">C227931</div>
<div class="td" style="left:314px;top:257px;width:152px">Patrick Hamilton</div>
<div class="td" style="left:474px;top:257px;width:152px">patrick@clubcaddie.com</div>
<div class="td" style="left:634px;top:257px;width:92px">4125555550</div>
<div class="td" style="left:734px;top:257px;width:62px">10.00</div>
<div class="td" style="left:804px;top:257px;width:62px">0.00</div>
<div class="td" style="left:874px;top:257px;width:79px">0</div>
<div class="td" style="left:961px;top:257px;width:97px">0.00</div>
<div class="td" style="left:1066px;top:257px;width:62px">10.00</div>
<div class="td" style="left:1136px;top:257px;width:62px">0.00</div>
<div class="td" style="left:1206px;top:257px;width:152px">membership_id</div>
<div class="td" style="left:1366px;top:257px;width:152px">09 Oct 2025, 11:50 AM</div>
<div class="bd act" style="left:1529px;top:260px"></div>
<div class="abs" style="left:1583.35px;top:266.27px;font-size:13.5px;line-height:13.5px;color:#fff;white-space:nowrap;transform:scaleX(1.0146);transform-origin:0 0;-webkit-text-stroke:0.2px #fff;">Active</div>
<div class="bd act" style="left:1689px;top:260px"></div>
<div class="abs" style="left:1738.75px;top:266.27px;font-size:13.5px;line-height:13.5px;color:#fff;white-space:nowrap;transform:scaleX(0.9114);transform-origin:0 0;-webkit-text-stroke:0.2px #fff;">Success</div>
<div class="keb" style="left:1870.8px;top:265.70px"></div>
<div class="keb" style="left:1870.8px;top:270.45px"></div>
<div class="keb" style="left:1870.8px;top:275.20px"></div>
<div class="hl" style="left:3px;top:319px;width:1897px"></div>
<div class="td" style="left:4px;top:289px;width:56px">650030</div>
<div class="td" style="left:68px;top:289px;width:152px">09 Oct 2025, 11:48 AM</div>
<div class="td" style="left:228px;top:289px;width:78px">C227931</div>
<div class="td" style="left:314px;top:289px;width:152px">Patrick Hamilton</div>
<div class="td" style="left:474px;top:289px;width:152px">patrick@clubcaddie.com</div>
<div class="td" style="left:634px;top:289px;width:92px">4125555550</div>
<div class="td" style="left:734px;top:289px;width:62px">10.00</div>
<div class="td" style="left:804px;top:289px;width:62px">0.00</div>
<div class="td" style="left:874px;top:289px;width:79px">0</div>
<div class="td" style="left:961px;top:289px;width:97px">0.00</div>
<div class="td" style="left:1066px;top:289px;width:62px">10.00</div>
<div class="td" style="left:1136px;top:289px;width:62px">0.00</div>
<div class="td" style="left:1206px;top:289px;width:152px">membership_id</div>
<div class="td" style="left:1366px;top:289px;width:152px">09 Oct 2025, 11:48 AM</div>
<div class="bd act" style="left:1529px;top:292px"></div>
<div class="abs" style="left:1583.35px;top:298.27px;font-size:13.5px;line-height:13.5px;color:#fff;white-space:nowrap;transform:scaleX(1.0146);transform-origin:0 0;-webkit-text-stroke:0.2px #fff;">Active</div>
<div class="bd act" style="left:1689px;top:292px"></div>
<div class="abs" style="left:1738.75px;top:298.27px;font-size:13.5px;line-height:13.5px;color:#fff;white-space:nowrap;transform:scaleX(0.9114);transform-origin:0 0;-webkit-text-stroke:0.2px #fff;">Success</div>
<div class="keb" style="left:1870.8px;top:297.70px"></div>
<div class="keb" style="left:1870.8px;top:302.45px"></div>
<div class="keb" style="left:1870.8px;top:307.20px"></div>
<div class="hl" style="left:3px;top:351px;width:1897px"></div>
<div class="td" style="left:4px;top:321px;width:56px">650028</div>
<div class="td" style="left:68px;top:321px;width:152px">09 Oct 2025, 11:47 AM</div>
<div class="td" style="left:228px;top:321px;width:78px">C227931</div>
<div class="td" style="left:314px;top:321px;width:152px">Patrick Hamilton</div>
<div class="td" style="left:474px;top:321px;width:152px">patrick@clubcaddie.com</div>
<div class="td" style="left:634px;top:321px;width:92px">4125555550</div>
<div class="td" style="left:734px;top:321px;width:62px">20.00</div>
<div class="td" style="left:804px;top:321px;width:62px">0.00</div>
<div class="td" style="left:874px;top:321px;width:79px">0</div>
<div class="td" style="left:961px;top:321px;width:97px">0.00</div>
<div class="td" style="left:1066px;top:321px;width:62px">20.00</div>
<div class="td" style="left:1136px;top:321px;width:62px">0.00</div>
<div class="td" style="left:1206px;top:321px;width:152px">membership_id</div>
<div class="td" style="left:1366px;top:321px;width:152px">09 Oct 2025, 11:47 AM</div>
<div class="bd act" style="left:1529px;top:324px"></div>
<div class="abs" style="left:1583.35px;top:330.27px;font-size:13.5px;line-height:13.5px;color:#fff;white-space:nowrap;transform:scaleX(1.0146);transform-origin:0 0;-webkit-text-stroke:0.2px #fff;">Active</div>
<div class="bd act" style="left:1689px;top:324px"></div>
<div class="abs" style="left:1738.75px;top:330.27px;font-size:13.5px;line-height:13.5px;color:#fff;white-space:nowrap;transform:scaleX(0.9114);transform-origin:0 0;-webkit-text-stroke:0.2px #fff;">Success</div>
<div class="keb" style="left:1870.8px;top:329.70px"></div>
<div class="keb" style="left:1870.8px;top:334.45px"></div>
<div class="keb" style="left:1870.8px;top:339.20px"></div>
<div class="hl" style="left:3px;top:383px;width:1897px"></div>
<div class="td" style="left:4px;top:353px;width:56px">650026</div>
<div class="td" style="left:68px;top:353px;width:152px">09 Oct 2025, 11:45 AM</div>
<div class="td" style="left:228px;top:353px;width:78px">C227931</div>
<div class="td" style="left:314px;top:353px;width:152px">Patrick Hamilton</div>
<div class="td" style="left:474px;top:353px;width:152px">patrick@clubcaddie.com</div>
<div class="td" style="left:634px;top:353px;width:92px">4125555550</div>
<div class="td" style="left:734px;top:353px;width:62px">20.00</div>
<div class="td" style="left:804px;top:353px;width:62px">0.00</div>
<div class="td" style="left:874px;top:353px;width:79px">0</div>
<div class="td" style="left:961px;top:353px;width:97px">0.00</div>
<div class="td" style="left:1066px;top:353px;width:62px">20.00</div>
<div class="td" style="left:1136px;top:353px;width:62px">0.00</div>
<div class="td" style="left:1206px;top:353px;width:152px">membership_id</div>
<div class="td" style="left:1366px;top:353px;width:152px">09 Oct 2025, 11:45 AM</div>
<div class="bd act" style="left:1529px;top:356px"></div>
<div class="abs" style="left:1583.35px;top:362.27px;font-size:13.5px;line-height:13.5px;color:#fff;white-space:nowrap;transform:scaleX(1.0146);transform-origin:0 0;-webkit-text-stroke:0.2px #fff;">Active</div>
<div class="bd act" style="left:1689px;top:356px"></div>
<div class="abs" style="left:1738.75px;top:362.27px;font-size:13.5px;line-height:13.5px;color:#fff;white-space:nowrap;transform:scaleX(0.9114);transform-origin:0 0;-webkit-text-stroke:0.2px #fff;">Success</div>
<div class="keb" style="left:1870.8px;top:361.70px"></div>
<div class="keb" style="left:1870.8px;top:366.45px"></div>
<div class="keb" style="left:1870.8px;top:371.20px"></div>
<div class="hl" style="left:3px;top:415px;width:1897px"></div>
<div class="td" style="left:4px;top:385px;width:56px">650025</div>
<div class="td" style="left:68px;top:385px;width:152px">09 Oct 2025, 11:42 AM</div>
<div class="td" style="left:228px;top:385px;width:78px">C227931</div>
<div class="td" style="left:314px;top:385px;width:152px">Patrick Hamilton</div>
<div class="td" style="left:474px;top:385px;width:152px">patrick@clubcaddie.com</div>
<div class="td" style="left:634px;top:385px;width:92px">4125555550</div>
<div class="td" style="left:734px;top:385px;width:62px">40.00</div>
<div class="td" style="left:804px;top:385px;width:62px">0.00</div>
<div class="td" style="left:874px;top:385px;width:79px">0</div>
<div class="td" style="left:961px;top:385px;width:97px">0.00</div>
<div class="td" style="left:1066px;top:385px;width:62px">40.00</div>
<div class="td" style="left:1136px;top:385px;width:62px">0.00</div>
<div class="td" style="left:1206px;top:385px;width:152px">membership_id</div>
<div class="td" style="left:1366px;top:385px;width:152px">09 Oct 2025, 11:42 AM</div>
<div class="bd act" style="left:1529px;top:388px"></div>
<div class="abs" style="left:1583.35px;top:394.27px;font-size:13.5px;line-height:13.5px;color:#fff;white-space:nowrap;transform:scaleX(1.0146);transform-origin:0 0;-webkit-text-stroke:0.2px #fff;">Active</div>
<div class="bd act" style="left:1689px;top:388px"></div>
<div class="abs" style="left:1738.75px;top:394.27px;font-size:13.5px;line-height:13.5px;color:#fff;white-space:nowrap;transform:scaleX(0.9114);transform-origin:0 0;-webkit-text-stroke:0.2px #fff;">Success</div>
<div class="keb" style="left:1870.8px;top:393.70px"></div>
<div class="keb" style="left:1870.8px;top:398.45px"></div>
<div class="keb" style="left:1870.8px;top:403.20px"></div>
<div class="hl" style="left:3px;top:447px;width:1897px"></div>
<div class="td" style="left:4px;top:417px;width:56px">650024</div>
<div class="td" style="left:68px;top:417px;width:152px">09 Oct 2025, 11:41 AM</div>
<div class="td" style="left:228px;top:417px;width:78px">C227931</div>
<div class="td" style="left:314px;top:417px;width:152px">Patrick Hamilton</div>
<div class="td" style="left:474px;top:417px;width:152px">patrick@clubcaddie.com</div>
<div class="td" style="left:634px;top:417px;width:92px">4125555550</div>
<div class="td" style="left:734px;top:417px;width:62px">20.00</div>
<div class="td" style="left:804px;top:417px;width:62px">0.00</div>
<div class="td" style="left:874px;top:417px;width:79px">0</div>
<div class="td" style="left:961px;top:417px;width:97px">0.00</div>
<div class="td" style="left:1066px;top:417px;width:62px">20.00</div>
<div class="td" style="left:1136px;top:417px;width:62px">0.00</div>
<div class="td" style="left:1206px;top:417px;width:152px">membership_id</div>
<div class="td" style="left:1366px;top:417px;width:152px">09 Oct 2025, 11:41 AM</div>
<div class="bd act" style="left:1529px;top:420px"></div>
<div class="abs" style="left:1583.35px;top:426.27px;font-size:13.5px;line-height:13.5px;color:#fff;white-space:nowrap;transform:scaleX(1.0146);transform-origin:0 0;-webkit-text-stroke:0.2px #fff;">Active</div>
<div class="bd act" style="left:1689px;top:420px"></div>
<div class="abs" style="left:1738.75px;top:426.27px;font-size:13.5px;line-height:13.5px;color:#fff;white-space:nowrap;transform:scaleX(0.9114);transform-origin:0 0;-webkit-text-stroke:0.2px #fff;">Success</div>
<div class="keb" style="left:1870.8px;top:425.70px"></div>
<div class="keb" style="left:1870.8px;top:430.45px"></div>
<div class="keb" style="left:1870.8px;top:435.20px"></div>
<div class="hl" style="left:3px;top:479px;width:1897px"></div>
<div class="td" style="left:4px;top:449px;width:56px">650022</div>
<div class="td" style="left:68px;top:449px;width:152px">09 Oct 2025, 11:28 AM</div>
<div class="td" style="left:228px;top:449px;width:78px">C189686</div>
<div class="td" style="left:314px;top:449px;width:152px">Stuart Proctor</div>
<div class="td" style="left:474px;top:449px;width:152px">proctor.stu@gmail.com</div>
<div class="td" style="left:634px;top:449px;width:92px">4078371329</div>
<div class="td" style="left:734px;top:449px;width:62px">45.00</div>
<div class="td" style="left:804px;top:449px;width:62px">0.00</div>
<div class="td" style="left:874px;top:449px;width:79px">0</div>
<div class="td" style="left:961px;top:449px;width:97px">0.00</div>
<div class="td" style="left:1066px;top:449px;width:62px">45.00</div>
<div class="td" style="left:1136px;top:449px;width:62px">0.00</div>
<div class="td" style="left:1206px;top:449px;width:152px">membership_id</div>
<div class="td" style="left:1366px;top:449px;width:152px">09 Oct 2025, 11:28 AM</div>
<div class="bd act" style="left:1529px;top:452px"></div>
<div class="abs" style="left:1583.35px;top:458.27px;font-size:13.5px;line-height:13.5px;color:#fff;white-space:nowrap;transform:scaleX(1.0146);transform-origin:0 0;-webkit-text-stroke:0.2px #fff;">Active</div>
<div class="bd act" style="left:1689px;top:452px"></div>
<div class="abs" style="left:1738.75px;top:458.27px;font-size:13.5px;line-height:13.5px;color:#fff;white-space:nowrap;transform:scaleX(0.9114);transform-origin:0 0;-webkit-text-stroke:0.2px #fff;">Success</div>
<div class="keb" style="left:1870.8px;top:457.70px"></div>
<div class="keb" style="left:1870.8px;top:462.45px"></div>
<div class="keb" style="left:1870.8px;top:467.20px"></div>
<div class="hl" style="left:3px;top:511px;width:1897px"></div>
<div class="td" style="left:4px;top:481px;width:56px">650021</div>
<div class="td" style="left:68px;top:481px;width:152px">09 Oct 2025, 11:26 AM</div>
<div class="td" style="left:228px;top:481px;width:78px">G70520</div>
<div class="td" style="left:314px;top:481px;width:152px">Travis Kreiger</div>
<div class="td" style="left:474px;top:481px;width:152px">travis@clubcaddie.com</div>
<div class="td" style="left:634px;top:481px;width:92px">7173152212</div>
<div class="td" style="left:734px;top:481px;width:62px">15.00</div>
<div class="td" style="left:804px;top:481px;width:62px">7.50</div>
<div class="td" style="left:874px;top:481px;width:79px">0.5</div>
<div class="td" style="left:961px;top:481px;width:97px">0.90</div>
<div class="td" style="left:1066px;top:481px;width:62px">10.68</div>
<div class="td" style="left:1136px;top:481px;width:62px">1.78</div>
<div class="td" style="left:1206px;top:481px;width:152px">membership_id</div>
<div class="td" style="left:1366px;top:481px;width:152px">09 Oct 2025, 11:26 AM</div>
<div class="bd act" style="left:1529px;top:484px"></div>
<div class="abs" style="left:1583.35px;top:490.27px;font-size:13.5px;line-height:13.5px;color:#fff;white-space:nowrap;transform:scaleX(1.0146);transform-origin:0 0;-webkit-text-stroke:0.2px #fff;">Active</div>
<div class="bd act" style="left:1689px;top:484px"></div>
<div class="abs" style="left:1738.75px;top:490.27px;font-size:13.5px;line-height:13.5px;color:#fff;white-space:nowrap;transform:scaleX(0.9114);transform-origin:0 0;-webkit-text-stroke:0.2px #fff;">Success</div>
<div class="keb" style="left:1870.8px;top:489.70px"></div>
<div class="keb" style="left:1870.8px;top:494.45px"></div>
<div class="keb" style="left:1870.8px;top:499.20px"></div>
<div class="hl" style="left:3px;top:543px;width:1897px"></div>
<div class="td" style="left:4px;top:513px;width:56px">650016</div>
<div class="td" style="left:68px;top:513px;width:152px">09 Oct 2025, 10:42 AM</div>
<div class="td" style="left:228px;top:513px;width:78px">C189686</div>
<div class="td" style="left:314px;top:513px;width:152px">Stuart Proctor</div>
<div class="td" style="left:474px;top:513px;width:152px">proctor.stu@gmail.com</div>
<div class="td" style="left:634px;top:513px;width:92px">4078371329</div>
<div class="td" style="left:734px;top:513px;width:62px">45.00</div>
<div class="td" style="left:804px;top:513px;width:62px">0.00</div>
<div class="td" style="left:874px;top:513px;width:79px">0</div>
<div class="td" style="left:961px;top:513px;width:97px">0.00</div>
<div class="td" style="left:1066px;top:513px;width:62px">45.00</div>
<div class="td" style="left:1136px;top:513px;width:62px">0.00</div>
<div class="td" style="left:1206px;top:513px;width:152px">membership_id</div>
<div class="td" style="left:1366px;top:513px;width:152px">09 Oct 2025, 10:42 AM</div>
<div class="bd act" style="left:1529px;top:516px"></div>
<div class="abs" style="left:1583.35px;top:522.27px;font-size:13.5px;line-height:13.5px;color:#fff;white-space:nowrap;transform:scaleX(1.0146);transform-origin:0 0;-webkit-text-stroke:0.2px #fff;">Active</div>
<div class="bd act" style="left:1689px;top:516px"></div>
<div class="abs" style="left:1738.75px;top:522.27px;font-size:13.5px;line-height:13.5px;color:#fff;white-space:nowrap;transform:scaleX(0.9114);transform-origin:0 0;-webkit-text-stroke:0.2px #fff;">Success</div>
<div class="keb" style="left:1870.8px;top:521.70px"></div>
<div class="keb" style="left:1870.8px;top:526.45px"></div>
<div class="keb" style="left:1870.8px;top:531.20px"></div>
<div class="hl" style="left:3px;top:575px;width:1897px"></div>
<div class="td" style="left:4px;top:545px;width:56px">650015</div>
<div class="td" style="left:68px;top:545px;width:152px">09 Oct 2025, 10:32 AM</div>
<div class="td" style="left:734px;top:545px;width:62px">190.68</div>
<div class="td" style="left:804px;top:545px;width:62px">0.00</div>
<div class="td" style="left:874px;top:545px;width:79px">10.77</div>
<div class="td" style="left:961px;top:545px;width:97px">0.00</div>
<div class="td" style="left:1066px;top:545px;width:62px">201.45</div>
<div class="td" style="left:1136px;top:545px;width:62px">0.00</div>
<div class="td" style="left:1206px;top:545px;width:152px">cash</div>
<div class="td" style="left:1366px;top:545px;width:152px">09 Oct 2025, 10:33 AM</div>
<div class="bd act" style="left:1529px;top:548px"></div>
<div class="abs" style="left:1583.35px;top:554.27px;font-size:13.5px;line-height:13.5px;color:#fff;white-space:nowrap;transform:scaleX(1.0146);transform-origin:0 0;-webkit-text-stroke:0.2px #fff;">Active</div>
<div class="bd act" style="left:1689px;top:548px"></div>
<div class="abs" style="left:1738.75px;top:554.27px;font-size:13.5px;line-height:13.5px;color:#fff;white-space:nowrap;transform:scaleX(0.9114);transform-origin:0 0;-webkit-text-stroke:0.2px #fff;">Success</div>
<div class="keb" style="left:1870.8px;top:553.70px"></div>
<div class="keb" style="left:1870.8px;top:558.45px"></div>
<div class="keb" style="left:1870.8px;top:563.20px"></div>
</div>
<div class="abs" style="left:1902px;top:272px;width:20px;height:108px;background:#a9a9a9;border-radius:6px"></div>
<div class="abs" style="left:0;top:866px;width:1916px;height:1px;background:#bdbdbd"></div>
<div class="abs" style="left:7.70px;top:885.90px;font-size:13px;line-height:13px;font-weight:bold;color:#000;white-space:nowrap;transform:scaleX(0.8869);transform-origin:0 0;">Total Pages : 1038 | Page : 1</div>
<div class="abs" style="left:1742px;top:877px;width:159px;height:31px;background:#2d2926;border:1px solid #777;border-radius:3px"></div>
<div class="abs" style="left:1795.00px;top:885.90px;font-size:13px;line-height:13px;color:#fff;white-space:nowrap;transform:scaleX(0.9833);transform-origin:0 0;">Export All</div>
<div class="abs" style="left:0;top:923px;width:1916px;height:6px;background:#2d2926"></div>
<svg class="abs" style="left:1560px;top:0" width="160" height="180" viewBox="1560 0 160 180">
<defs><filter id="sh" x="-30%" y="-30%" width="160%" height="160%"><feGaussianBlur in="SourceAlpha" stdDeviation="2.2"/><feOffset dx="2" dy="3"/><feComponentTransfer><feFuncA type="linear" slope=".55"/></feComponentTransfer><feMerge><feMergeNode/><feMergeNode in="SourceGraphic"/></feMerge></filter></defs>
<g filter="url(#sh)">
<rect x="1581" y="3" width="122" height="99" fill="none" stroke="#fd4646" stroke-width="6"/>
<path d="M1630.5 104.3 L1628 129.5 L1621.3 125.3 L1595.5 161.9 A3.5 3.5 0 0 1 1589.7 157.9 L1614.7 120.7 L1608 116.5 Z" fill="#fd4646"/>
</g>
</svg>
</body></html>
